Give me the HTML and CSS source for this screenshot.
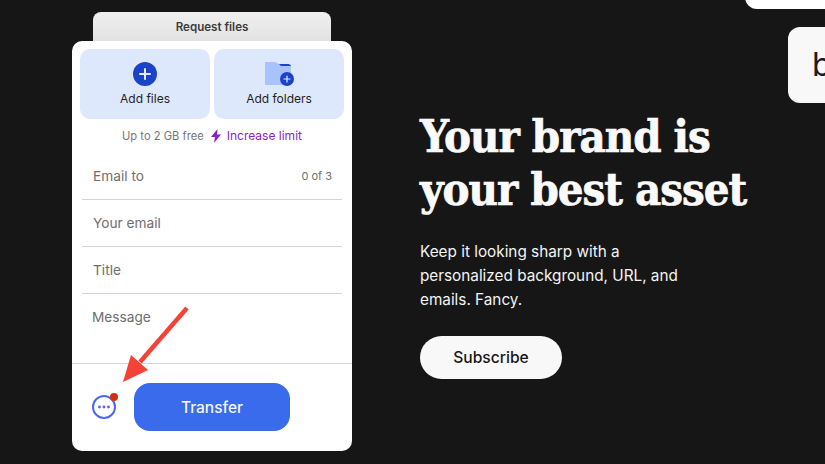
FILE: index.html
```html
<!DOCTYPE html>
<html lang="en">

<head>
  <meta charset="UTF-8">
  <meta name="viewport" content="width=device-width, initial-scale=1.0">
  <title>Your brand is your best asset</title>
  <link rel="stylesheet" href="styles.css">
</head>

<body>
  <div class="page">
    <div class="widget">
      <div class="tab">Request files</div>
      <div class="panel">
        <div class="tiles">
          <div class="tile">
            <svg class="tile-icon" width="26" height="26" viewBox="0 0 26 26">
              <circle cx="13" cy="13" r="12" fill="#1b43c6" />
              <path d="M13 8v10M8 13h10" stroke="#e8edfb" stroke-width="2" stroke-linecap="round" />
            </svg>
            <span>Add files</span>
          </div>
          <div class="tile">
            <svg class="tile-icon" width="30" height="26" viewBox="0 0 30 26">
              <path d="M1 1h10l4 2h9a3 3 0 0 1 3 3v18H1z" fill="#a8c2fd" />
              <path d="M15 3h9a3 3 0 0 1 3 2H17z" fill="#1b43c6" />
              <circle cx="23" cy="18" r="7" fill="#1b43c6" />
              <path d="M23 15v6M20 18h6" stroke="#e8edfb" stroke-width="1.2" stroke-linecap="round" />
            </svg>
            <span>Add folders</span>
          </div>
        </div>

        <div class="limit">
          <span>Up to 2 GB free</span>
          <svg class="limit-bolt" width="12" height="14" viewBox="0 0 12 14">
            <path d="M7.500 0 1 8h4l-1 6 7-8.500H7z" fill="#8a1fd0" />
          </svg>
          <a class="limit-link">Increase limit</a>
        </div>

        <div class="fields">
          <div class="field">
            <span>Email to</span>
            <span class="field-count">0 of 3</span>
          </div>
          <div class="field">Your email</div>
          <div class="field">Title</div>
          <div class="field field-message">Message</div>
        </div>

        <div class="panel-footer">
          <div class="more">
            <svg width="26" height="26" viewBox="0 0 26 26">
              <circle cx="13" cy="13" r="11" fill="none" stroke="#4f67ef" stroke-width="2" />
              <circle cx="8.500" cy="13" r="1.400" fill="#4f67ef" />
              <circle cx="13" cy="13" r="1.400" fill="#4f67ef" />
              <circle cx="17.500" cy="13" r="1.400" fill="#4f67ef" />
            </svg>
            <span class="more-dot"></span>
          </div>
          <button class="transfer">Transfer</button>
        </div>
      </div>
    </div>

    <div class="promo">
      <h1>Your brand is<br>your best asset</h1>
      <p>Keep it looking sharp with a<br>personalized background, URL, and<br>emails. Fancy.</p>
      <button class="subscribe">Subscribe</button>
    </div>
  </div>

  <div class="peek-pill"></div>
  <div class="peek-card">b</div>

  <svg class="annotation" width="80" height="90" viewBox="0 0 80 90">
    <path d="M66 2 19 56" stroke="#f44336" stroke-width="4.500" fill="none" />
    <path d="M2 76 10 49 27 64z" fill="#f44336" />
  </svg>
</body>

</html>
```

FILE: styles.css
```css
* {
  margin: 0;
  padding: 0;
  box-sizing: border-box;
}

body {
  font-family: Inter, 'Noto Sans', sans-serif;
  background-color: #161616;
  color: #fff;
  width: 825px;
  height: 464px;
  overflow: hidden;
  position: relative;
}

.page {
  display: flex;
  padding: 12px 0 0 72px;
}

.widget {
  width: 280px;
  flex-shrink: 0;
}

.tab {
  width: 238px;
  height: 29px;
  margin-left: 21px;
  padding-top: 8px;
  border-radius: 8px 8px 0 0;
  background: linear-gradient(#f0f0f0, #e2e2e2);
  color: #3c3c3c;
  font-size: 11.600px;
  font-weight: 600;
  line-height: 14px;
  text-align: center;
}

.panel {
  height: 410px;
  padding-top: 8px;
  background-color: #fff;
  border-radius: 10px;
}

.tiles {
  display: flex;
  gap: 4px;
  padding: 0 8px;
}

.tile {
  width: 130px;
  height: 70px;
  padding-top: 12px;
  display: flex;
  flex-direction: column;
  align-items: center;
  background-color: #dee8fd;
  border-radius: 10px;
  color: #1f1f23;
  font-size: 12px;
  line-height: 15px;
}

.tile-icon {
  height: 26px;
  margin-bottom: 4px;
}

.limit {
  height: 34px;
  display: flex;
  align-items: center;
  justify-content: center;
  gap: 6px;
  color: #76767a;
  font-size: 11.200px;
}

.limit-link {
  margin-left: -1px;
  margin-bottom: 1px;
  color: #8a1fd0;
  font-size: 12px;
}

.fields {
  margin: 0 10px;
}

.field {
  height: 47px;
  padding: 0 10px 0 11px;
  display: flex;
  align-items: center;
  justify-content: space-between;
  border-bottom: 1px solid #d4d4d4;
  color: #6e6e6e;
  font-size: 13.700px;
}

.field-count {
  font-size: 11px;
}

.field-message {
  height: 69px;
  padding: 15px 10px 0;
  align-items: flex-start;
  border-bottom: none;
}

.panel-footer {
  display: flex;
  align-items: center;
  gap: 17px;
  padding: 19px 0 0 19px;
  border-top: 1px solid #d4d4d4;
}

.more {
  position: relative;
  width: 26px;
  height: 26px;
}

.more-dot {
  position: absolute;
  top: -1px;
  right: -1px;
  width: 8px;
  height: 8px;
  border-radius: 50%;
  background-color: #d0300f;
}

.transfer {
  width: 156px;
  height: 48px;
  border: none;
  border-radius: 16px;
  background-color: #3a6bec;
  color: #f4f7ff;
  font-family: inherit;
  font-size: 15.500px;
  font-weight: 500;
}

.promo {
  margin-left: 68px;
  padding-top: 98px;
}

.promo h1 {
  font-family: 'DejaVu Serif', serif;
  font-stretch: condensed;
  font-size: 45px;
  font-weight: 700;
  line-height: 53px;
  letter-spacing: -1px;
  color: #fafafa;
  -webkit-text-stroke: 0.7px #fafafa;
  margin-bottom: 24px;
  white-space: nowrap;
}

.promo p {
  font-size: 15.300px;
  line-height: 24px;
  color: #f4f4f4;
  margin-bottom: 24px;
}

.subscribe {
  width: 142px;
  height: 43px;
  border: none;
  border-radius: 22px;
  background-color: #f8f8f8;
  color: #161616;
  font-family: inherit;
  font-size: 15.600px;
  font-weight: 500;
}

.peek-pill {
  position: absolute;
  top: -20px;
  left: 745px;
  width: 120px;
  height: 29px;
  background-color: #fff;
  border-radius: 12px;
}

.peek-card {
  position: absolute;
  top: 27px;
  left: 788px;
  width: 80px;
  height: 76px;
  padding: 18px 0 0 24px;
  background-color: #f8f8f8;
  border-radius: 12px;
  color: #1c1c1c;
  font-size: 32px;
}

.annotation {
  position: absolute;
  top: 306px;
  left: 121px;
}
```
